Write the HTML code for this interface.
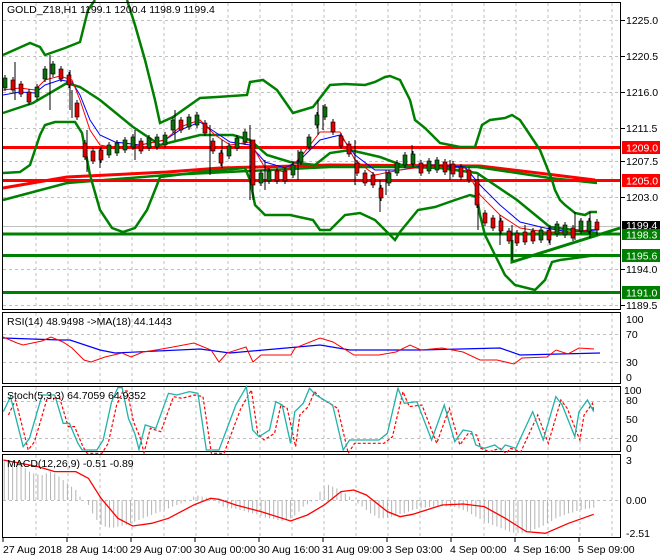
<!DOCTYPE html>
<html><head><meta charset="utf-8"><style>
html,body{margin:0;padding:0;background:#fff;width:660px;height:560px;overflow:hidden}
svg{display:block;font-family:"Liberation Sans",sans-serif;font-size:10.5px}
</style></head><body>
<svg width="660" height="560" viewBox="0 0 660 560" xmlns="http://www.w3.org/2000/svg">
<rect width="660" height="560" fill="#fff"/>
<g stroke="#c0c0c0" stroke-dasharray="3,3" stroke-width="1" fill="none">
<path d="M36 3V309M68 3V309M100 3V309M132 3V309M164 3V309M196 3V309M228 3V309M260 3V309M292 3V309M324 3V309M356 3V309M388 3V309M420 3V309M452 3V309M484 3V309M516 3V309M548 3V309M580 3V309M612 3V309"/>
<path d="M3 20.5H620M3 56.5H620M3 92.5H620M3 128.5H620M3 161.5H620M3 197.5H620M3 269.5H620M3 305.5H620"/>
<path d="M36 313V383M68 313V383M100 313V383M132 313V383M164 313V383M196 313V383M228 313V383M260 313V383M292 313V383M324 313V383M356 313V383M388 313V383M420 313V383M452 313V383M484 313V383M516 313V383M548 313V383M580 313V383M612 313V383"/>
<path d="M3 334.5H620M3 362.5H620"/>
<path d="M36 387V451M68 387V451M100 387V451M132 387V451M164 387V451M196 387V451M228 387V451M260 387V451M292 387V451M324 387V451M356 387V451M388 387V451M420 387V451M452 387V451M484 387V451M516 387V451M548 387V451M580 387V451M612 387V451"/>
<path d="M3 401.5H620M3 438.5H620"/>
<path d="M36 455V537M68 455V537M100 455V537M132 455V537M164 455V537M196 455V537M228 455V537M260 455V537M292 455V537M324 455V537M356 455V537M388 455V537M420 455V537M452 455V537M484 455V537M516 455V537M548 455V537M580 455V537M612 455V537"/>
<path d="M3 500.5H620"/>
</g>
<line x1="3" y1="226.5" x2="620" y2="226.5" stroke="#c0c0c0"/>
<polyline fill="none" stroke="#f00" stroke-width="3" points="3,188 67,177 167,172 220,168 330,165 480,166 530,172 595,180"/>
<polyline fill="none" stroke="#008000" stroke-width="2.5" points="3,200 67,183 167,175 330,167 477,167 550,178 597,183"/>
<g stroke-width="3">
<line x1="3" y1="147.5" x2="620" y2="147.5" stroke="#f00"/>
<line x1="3" y1="180.5" x2="620" y2="180.5" stroke="#f00"/>
<line x1="3" y1="234" x2="620" y2="234" stroke="#008000"/>
<line x1="3" y1="255.5" x2="620" y2="255.5" stroke="#008000"/>
<line x1="3" y1="292.5" x2="620" y2="292.5" stroke="#008000"/>
<polyline fill="none" stroke="#008000" points="512,240 512,262 620,228"/>
</g>
<g fill="none" stroke="#008000" stroke-width="2.5">
<polyline points="3,55 30,43 40,47 45,55 65,48 80,42 88,10 95,0"/>
<polyline points="127,0 135,25 145,60 155,100 160,123 173,117 200,98 217,97 247,95 250,82 263,80 277,90 293,113 313,107 330,85 345,84 365,85 375,82 385,77 390,76 400,80 410,100 415,120 425,128 432,135 440,143 460,147 475,147 482,125 490,120 505,118 512,115 520,120 530,135 540,150 552,180 555,190 560,200 565,205 575,213 585,215 590,212 597,212"/>
<polyline points="3,113 33,103 67,83 80,87 100,100 133,127 160,145 200,135 233,135 250,140 267,155 290,162 315,165 330,153 350,150 380,157 407,167 440,168 477,173 517,200 550,227 597,233"/>
<polyline points="3,173 20,172 30,165 40,135 45,125 55,122 75,122 82,133 90,175 100,210 112,228 123,232 135,228 147,210 157,185 160,177 200,172 245,168 250,180 255,205 265,215 290,215 313,220 320,230 330,230 345,215 360,213 375,220 390,235 395,240 400,232 418,210 435,207 455,200 470,195 477,197 480,215 485,235 495,255 505,275 515,285 535,290 545,280 552,262 560,260 575,258 597,255"/>
</g>
<polyline fill="none" stroke="#00f" stroke-width="1" points="3,95 20,92 35,93 45,85 60,80 72,82 80,95 90,120 100,135 115,142 140,145 165,140 180,130 200,122 215,132 230,142 250,145 265,162 285,168 300,160 320,140 340,135 355,155 375,170 400,170 430,165 465,167 480,185 500,205 520,222 545,228 570,232 597,230"/>
<polyline fill="none" stroke="#f00" stroke-width="1" points="3,90 20,88 35,90 45,80 60,76 72,80 80,100 90,130 100,145 115,148 140,145 165,140 180,127 200,120 215,135 230,145 250,142 265,168 285,172 300,158 320,132 340,132 355,160 375,175 400,170 430,166 465,168 480,195 500,215 520,228 545,232 570,232 597,229"/>
<g stroke="#000" stroke-width="1">
<path d="M15 62V100M50 55V110M70 70V110M72 90V118M87 130V172M100 148V168M135 130V160M175 110V140M210 125V175M222 140V168M250 125V200M253 150V200M265 160V190M298 150V180M318 100V135M323 105V130M355 140V185M380 180V212M386 170V195M412 145V165M450 160V180M478 175V230M500 215V245M512 225V260M525 225V245M550 225V245M575 212V240M590 212V238"/>
<path d="M5 75V91M13 77V93M21 81V97M29 89V105M37 84V100M45 66V82M53 61V77M61 66V82M69 72V88M77 100V120M85 140V160M93 148V164M101 147V163M109 142V158M117 140V156M125 137V153M133 134V150M141 138V154M149 135V151M157 134V150M165 132V148M173 117V133M181 117V133M189 114V130M197 112V128M205 120V136M213 138V154M221 150V166M229 143V159M237 135V151M245 129V145M253 172V188M261 170V186M269 168V184M277 168V184M285 168V184M293 162V178M301 149V165M309 134V150M317 112V128M325 104V120M333 119V135M341 133V149M349 141V157M357 160V176M365 170V186M373 172V188M381 185V201M389 170V186M397 160V176M405 152V168M413 151V167M421 160V176M429 158V174M437 157V173M445 159V175M453 161V177M461 164V180M469 167V183M477 192V208M485 210V226M493 215V231M501 218V234M509 228V244M517 230V246M525 229V245M533 228V244M541 227V243M549 227V243M557 221V237M565 222V238M573 225V241M581 218V234M589 218V234M597 219V235"/>
</g>
<g stroke="#000" stroke-width="0.6">
<g fill="#0a6e0a">
<rect x="3" y="78" width="4" height="10"/><rect x="35" y="87" width="4" height="10"/><rect x="43" y="69" width="4" height="10"/><rect x="51" y="64" width="4" height="10"/><rect x="107" y="145" width="4" height="10"/><rect x="115" y="143" width="4" height="10"/><rect x="123" y="140" width="4" height="10"/><rect x="131" y="137" width="4" height="10"/><rect x="147" y="138" width="4" height="10"/><rect x="155" y="137" width="4" height="10"/><rect x="163" y="135" width="4" height="10"/><rect x="171" y="120" width="4" height="10"/><rect x="187" y="117" width="4" height="10"/><rect x="195" y="115" width="4" height="10"/><rect x="227" y="146" width="4" height="10"/><rect x="235" y="138" width="4" height="10"/><rect x="243" y="132" width="4" height="10"/><rect x="259" y="173" width="4" height="10"/><rect x="267" y="171" width="4" height="10"/><rect x="291" y="165" width="4" height="10"/><rect x="299" y="152" width="4" height="10"/><rect x="307" y="137" width="4" height="10"/><rect x="315" y="115" width="4" height="10"/><rect x="323" y="107" width="4" height="10"/><rect x="387" y="173" width="4" height="10"/><rect x="395" y="163" width="4" height="10"/><rect x="403" y="155" width="4" height="10"/><rect x="411" y="154" width="4" height="10"/><rect x="427" y="161" width="4" height="10"/><rect x="435" y="160" width="4" height="10"/><rect x="539" y="230" width="4" height="10"/><rect x="555" y="224" width="4" height="10"/><rect x="563" y="225" width="4" height="10"/><rect x="579" y="221" width="4" height="10"/><rect x="587" y="221" width="4" height="10"/>
</g>
<g fill="#e00000">
<rect x="11" y="80" width="4" height="10"/><rect x="19" y="84" width="4" height="10"/><rect x="27" y="92" width="4" height="10"/><rect x="59" y="69" width="4" height="10"/><rect x="67" y="75" width="4" height="10"/><rect x="75" y="103" width="4" height="14"/><rect x="83" y="143" width="4" height="14"/><rect x="91" y="151" width="4" height="10"/><rect x="99" y="150" width="4" height="10"/><rect x="139" y="141" width="4" height="10"/><rect x="179" y="120" width="4" height="10"/><rect x="203" y="123" width="4" height="10"/><rect x="211" y="141" width="4" height="10"/><rect x="219" y="153" width="4" height="10"/><rect x="251" y="140" width="4" height="45"/><rect x="275" y="171" width="4" height="10"/><rect x="283" y="171" width="4" height="10"/><rect x="331" y="122" width="4" height="10"/><rect x="339" y="136" width="4" height="10"/><rect x="347" y="144" width="4" height="10"/><rect x="355" y="163" width="4" height="10"/><rect x="363" y="173" width="4" height="10"/><rect x="371" y="175" width="4" height="10"/><rect x="379" y="188" width="4" height="10"/><rect x="419" y="163" width="4" height="10"/><rect x="443" y="162" width="4" height="10"/><rect x="451" y="164" width="4" height="10"/><rect x="459" y="167" width="4" height="10"/><rect x="467" y="170" width="4" height="10"/><rect x="475" y="180" width="4" height="25"/><rect x="483" y="213" width="4" height="10"/><rect x="491" y="218" width="4" height="10"/><rect x="499" y="221" width="4" height="10"/><rect x="507" y="231" width="4" height="10"/><rect x="515" y="233" width="4" height="10"/><rect x="523" y="232" width="4" height="10"/><rect x="531" y="231" width="4" height="10"/><rect x="547" y="230" width="4" height="10"/><rect x="571" y="228" width="4" height="10"/><rect x="595" y="222" width="4" height="8"/>
</g>
</g>
<rect x="2.5" y="2.5" width="618" height="307" fill="none" stroke="#000"/>
<text x="7" y="13" fill="#000">GOLD_Z18,H1  1199.1 1200.4 1198.9 1199.4</text>
<g fill="#000">
<path d="M621 20.5h4M621 56.5h4M621 92.5h4M621 128.5h4M621 161.5h4M621 197.5h4M621 269.5h4M621 305.5h4" stroke="#000"/>
<text x="626" y="24">1225.0</text><text x="626" y="60">1220.5</text><text x="626" y="96">1216.0</text><text x="626" y="132">1211.5</text><text x="626" y="165">1207.5</text><text x="626" y="201">1203.0</text><text x="626" y="273">1194.0</text><text x="626" y="309">1189.5</text>
</g>
<rect x="622" y="141" width="38" height="13" fill="#f00"/><text x="626" y="151.5" fill="#fff">1209.0</text>
<rect x="622" y="174" width="38" height="13" fill="#f00"/><text x="626" y="184.5" fill="#fff">1205.0</text>
<rect x="622" y="221" width="38" height="9" fill="#000"/><text x="626" y="229" fill="#fff">1199.4</text>
<rect x="622" y="229" width="38" height="11" fill="#008000"/><text x="626" y="238.5" fill="#fff">1198.3</text>
<rect x="622" y="249" width="38" height="13" fill="#008000"/><text x="626" y="259.5" fill="#fff">1195.6</text>
<rect x="622" y="286" width="38" height="13" fill="#008000"/><text x="626" y="296.5" fill="#fff">1191.0</text>

<rect x="2.5" y="312.5" width="618" height="71" fill="none" stroke="#000"/>
<polyline fill="none" stroke="#00f" stroke-width="1.2" points="3,338 60,340 70,340 100,350 115,353 200,349 230,353 320,345 350,350 420,350 500,348 520,355 600,353"/>
<polyline fill="none" stroke="#f00" stroke-width="1" points="3,337 17,343 23,345 42,341 51,337 63,342 72,348 84,360 91,362 105,357 122,353 131,357 143,352 156,350 173,347 194,343 211,350 219,362 227,353 246,347 253,362 261,355 291,355 295,348 320,338 333,342 354,355 379,355 396,352 410,345 421,350 442,348 463,352 480,360 497,360 514,364 522,358 547,357 556,350 568,354 579,348 594,349"/>
<text x="7" y="325" fill="#000">RSI(14) 48.9498  -&gt;MA(18) 44.1443</text>
<g fill="#000"><text x="626" y="323">100</text><text x="626" y="338">70</text><text x="626" y="366">30</text><text x="626" y="381">0</text></g>

<rect x="2.5" y="386.5" width="618" height="65" fill="none" stroke="#000"/>
<g transform="translate(0,305) scale(0.4211,0.3333)" fill="none">
<polyline vector-effect="non-scaling-stroke" stroke="#f00" stroke-width="1.2" stroke-dasharray="3,2" transform="translate(12,10)" points="8,320 25,275 55,425 70,400 100,270 130,270 150,355 165,355 185,415 195,435 230,435 245,405 265,290 280,248 290,248 305,340 320,385 330,433 345,360 370,370 400,265 420,270 450,260 470,265 490,435 520,435 560,300 585,245 600,375 615,395 640,375 655,290 670,300 690,415 700,320 720,295 735,250 750,270 790,300 815,435 830,405 870,405 900,405 920,385 945,250 960,295 990,290 1025,405 1055,300 1080,410 1100,375 1120,380 1130,420 1150,430 1175,420 1190,435 1200,420 1225,430 1265,320 1290,405 1320,275 1335,300 1365,395 1375,320 1395,285 1398,310"/>
<polyline vector-effect="non-scaling-stroke" stroke="#20b2aa" stroke-width="1.3" points="8,320 25,275 55,425 70,400 100,270 130,270 150,355 165,355 185,415 195,435 230,435 245,405 265,290 280,248 290,248 305,340 320,385 330,433 345,360 370,370 400,265 420,270 450,260 470,265 490,435 520,435 560,300 585,245 600,375 615,395 640,375 655,290 670,300 690,415 700,320 720,295 735,250 750,270 790,300 815,435 830,405 870,405 900,405 920,385 945,250 960,295 990,290 1025,405 1055,300 1080,410 1100,375 1120,380 1130,420 1150,430 1175,420 1190,435 1200,420 1225,430 1265,320 1290,405 1320,275 1335,300 1365,395 1375,320 1395,285 1410,320"/>
</g>
<text x="7" y="399" fill="#000">Stoch(5,3,3) 64.7059 64.9352</text>
<g fill="#000"><text x="624" y="394">100</text><text x="626" y="404">80</text><text x="626" y="423">50</text><text x="626" y="442">20</text><text x="626" y="452">0</text></g>

<rect x="2.5" y="454.5" width="618" height="83" fill="none" stroke="#000"/>
<g transform="translate(0,305) scale(0.4211,0.3333)" fill="none">
<path vector-effect="non-scaling-stroke" stroke="#b4b4b4" stroke-width="1" d="M10 585V465M20 585V465M30 585V468M40 585V472M50 585V478M60 585V490M70 585V500M80 585V505M90 585V508M100 585V510M110 585V505M120 585V500M130 585V505M140 585V515M150 585V525M160 585V535M170 585V545M180 585V555M190 585V575M210 585V600M220 585V625M230 585V645M240 585V660M250 585V665M260 585V668M270 585V668M280 585V665M290 585V662M300 585V660M310 585V655M320 585V650M330 585V645M340 585V640M350 585V635M360 585V630M370 585V625M380 585V620M390 585V615M400 585V610M410 585V605M420 585V600M430 585V595M440 585V590M460 585V575M470 585V572M480 585V575M490 585V578M500 585V582M520 585V595M530 585V605M540 585V610M550 585V610M560 585V612M570 585V615M580 585V618M590 585V622M600 585V625M610 585V628M620 585V632M630 585V638M640 585V640M650 585V642M660 585V645M670 585V648M680 585V645M690 585V640M700 585V632M710 585V620M720 585V605M730 585V598M740 585V590M760 585V560M770 585V545M780 585V540M790 585V545M800 585V550M810 585V558M820 585V565M830 585V575M850 585V595M860 585V605M870 585V615M880 585V625M890 585V632M900 585V640M910 585V640M920 585V638M930 585V635M940 585V632M950 585V628M960 585V625M970 585V620M980 585V615M990 585V612M1000 585V610M1010 585V608M1020 585V606M1030 585V605M1040 585V605M1050 585V604M1060 585V604M1070 585V605M1080 585V606M1090 585V610M1100 585V615M1110 585V620M1120 585V628M1130 585V635M1140 585V642M1150 585V650M1160 585V655M1170 585V660M1180 585V665M1190 585V670M1200 585V675M1210 585V680M1220 585V683M1230 585V685M1240 585V685M1250 585V682M1260 585V678M1270 585V672M1280 585V668M1290 585V662M1300 585V655M1310 585V648M1320 585V640M1330 585V635M1340 585V630M1350 585V625M1360 585V622M1370 585V618M1380 585V615M1390 585V612M1400 585V610M1410 585V608"/>
<polyline vector-effect="non-scaling-stroke" stroke="#f00" stroke-width="1.3" points="8,465 90,485 130,500 180,500 210,520 240,580 280,640 315,663 360,655 400,640 460,600 500,580 520,583 560,600 620,620 690,648 730,630 770,600 810,560 840,555 870,570 920,620 950,635 980,628 1050,600 1100,597 1150,605 1200,640 1250,680 1295,685 1350,655 1410,628"/>
</g>
<text x="7" y="467" fill="#000">MACD(12,26,9) -0.51 -0.89</text>
<g fill="#000"><text x="626" y="464">3</text><text x="626" y="504">0.00</text><text x="626" y="537">-2.51</text></g>

<path d="M3 538v4M67 538v4M131 538v4M195 538v4M259 538v4M323 538v4M387 538v4M451 538v4M515 538v4M579 538v4" stroke="#000"/>
<g fill="#000">
<text x="3" y="553">27 Aug 2018</text><text x="66" y="553">28 Aug 14:00</text><text x="130" y="553">29 Aug 07:00</text><text x="194" y="553">30 Aug 00:00</text><text x="258" y="553">30 Aug 16:00</text><text x="322" y="553">31 Aug 09:00</text><text x="386" y="553">3 Sep 03:00</text><text x="450" y="553">4 Sep 00:00</text><text x="514" y="553">4 Sep 16:00</text><text x="578" y="553">5 Sep 09:00</text>
</g>
</svg>
</body></html>
